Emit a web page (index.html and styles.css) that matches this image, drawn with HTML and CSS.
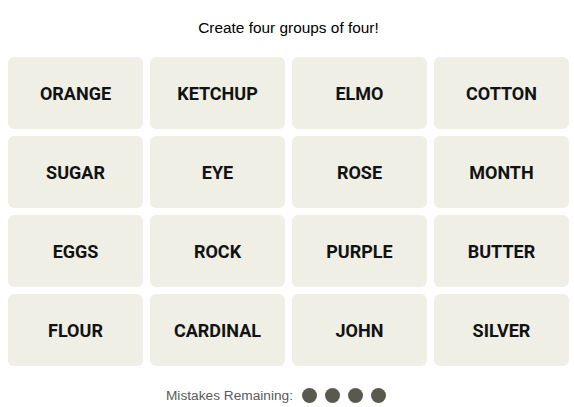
FILE: index.html
```html
<!DOCTYPE html>
<html lang="en">
  <head>
    <meta charset="UTF-8" />
    <meta name="viewport" content="width=device-width, initial-scale=1.0" />
    <title>Connections</title>
    <link rel="stylesheet" href="styles.css">
  </head>
  <body>
    <p class="prompt">Create four groups of four!</p>
    <div class="board">
      <button class="tile">ORANGE</button>
      <button class="tile">KETCHUP</button>
      <button class="tile">ELMO</button>
      <button class="tile">COTTON</button>
      <button class="tile">SUGAR</button>
      <button class="tile">EYE</button>
      <button class="tile">ROSE</button>
      <button class="tile">MONTH</button>
      <button class="tile">EGGS</button>
      <button class="tile">ROCK</button>
      <button class="tile">PURPLE</button>
      <button class="tile">BUTTER</button>
      <button class="tile">FLOUR</button>
      <button class="tile">CARDINAL</button>
      <button class="tile">JOHN</button>
      <button class="tile">SILVER</button>
    </div>
    <div class="mistakes">
      <span>Mistakes Remaining:</span>
      <span class="dots">
        <span class="dot"></span>
        <span class="dot"></span>
        <span class="dot"></span>
        <span class="dot"></span>
      </span>
    </div>
  </body>
</html>
```

FILE: styles.css
```css
body {
  margin: 0;
  padding: 0 5px 0 8px;
  font-family: "Liberation Sans", Arial, sans-serif;
  color: #000;
  background: #fff;
}

.prompt {
  margin: 0;
  padding-top: 18px;
  height: 39px;
  box-sizing: border-box;
  text-align: center;
  font-size: 15.4px;
  line-height: 20px;
}

.board {
  display: grid;
  grid-template-columns: repeat(4, 135px);
  grid-auto-rows: 72px;
  gap: 7px;
  margin-top: 18px;
}

.tile {
  border: none;
  border-radius: 6px;
  background: #efefe6;
  color: #121212;
  font-family: Roboto, "Liberation Sans", sans-serif;
  font-weight: 700;
  font-size: 18px;
  padding: 0;
}

.mistakes {
  display: flex;
  justify-content: center;
  align-items: center;
  gap: 9px;
  margin-top: 22px;
  padding-right: 25px;
  font-size: 13.7px;
  color: #5a5a5a;
}

.dots {
  display: flex;
  gap: 8px;
}

.dot {
  width: 15px;
  height: 15px;
  border-radius: 50%;
  background: #5a594e;
}
```
